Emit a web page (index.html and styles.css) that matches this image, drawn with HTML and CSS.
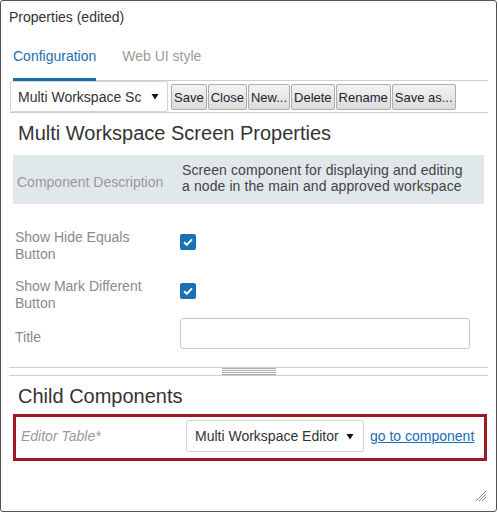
FILE: index.html
```html
<!DOCTYPE html>
<html>
<head>
<meta charset="utf-8">
<title>Properties</title>
<link rel="stylesheet" href="styles.css">
</head>
<body>
<div class="window">
  <div class="title">Properties (edited)</div>
  <div class="tabs">
    <div class="tab active">Configuration</div>
    <div class="tab">Web UI style</div>
  </div>
  <div class="toolbar">
    <div class="select sel-main"><span>Multi Workspace Sc</span><svg class="arrow" width="8" height="7" viewBox="0 0 8 7"><polygon points="0.5,1 7.5,1 4,6.5" fill="#111"/></svg></div>
    <div class="buttons">
      <button class="btn">Save</button>
      <button class="btn">Close</button>
      <button class="btn">New...</button>
      <button class="btn">Delete</button>
      <button class="btn">Rename</button>
      <button class="btn">Save as...</button>
    </div>
  </div>
  <h2 class="heading">Multi Workspace Screen Properties</h2>
  <div class="desc">
    <div class="desc-label">Component Description</div>
    <div class="desc-text">Screen component for displaying and editing a node in the main and approved workspace</div>
  </div>
  <div class="form">
    <div class="row">
      <div class="label">Show Hide Equals Button</div>
      <div class="cb"><svg width="16" height="16" viewBox="0 0 16 16"><rect x="0" y="0" width="16" height="16" rx="2" fill="#1a6fb5"/><path d="M4 8.2 L6.8 10.8 L12 5.4" fill="none" stroke="#fff" stroke-width="2"/></svg></div>
    </div>
    <div class="row row2">
      <div class="label">Show Mark Different Button</div>
      <div class="cb"><svg width="16" height="16" viewBox="0 0 16 16"><rect x="0" y="0" width="16" height="16" rx="2" fill="#1a6fb5"/><path d="M4 8.2 L6.8 10.8 L12 5.4" fill="none" stroke="#fff" stroke-width="2"/></svg></div>
    </div>
    <div class="row row3">
      <div class="label label-title">Title</div>
      <div class="input"></div>
    </div>
  </div>
  <div class="splitter"><div class="grip"></div></div>
  <h2 class="heading child-heading">Child Components</h2>
  <div class="child-box">
    <div class="child-label">Editor Table*</div>
    <div class="select sel-child"><span>Multi Workspace Editor</span><svg class="arrow" width="8" height="7" viewBox="0 0 8 7"><polygon points="0.5,1 7.5,1 4,6.5" fill="#111"/></svg></div>
    <a class="link" href="#">go to component</a>
  </div>
  <div class="resize"><svg width="12" height="12" viewBox="0 0 12 12"><path d="M1 11 L11 1 M4 11 L11 4 M7 11 L11 7" stroke="#8a8a8a" stroke-width="1"/></svg></div>
</div>
</body>
</html>
```

FILE: styles.css
```css
body {
  margin: 0;
  background: #fff;
  font-family: "Liberation Sans", Arial, sans-serif;
}

.window {
  position: relative;
  box-sizing: border-box;
  width: 497px;
  height: 512px;
  border: 1px solid #555;
  border-radius: 3px;
  padding: 0 8px;
}

.title {
  margin-top: 8px;
  font-size: 14px;
  line-height: 16px;
  color: #333;
}

.tabs {
  display: flex;
  gap: 26px;
  margin: 10px 0 0 4px;
  border-bottom: 1px solid #ccc;
}

.tab {
  font-size: 14px;
  line-height: 16px;
  padding: 13px 0 14px;
  color: #9a9a9a;
  border-bottom: 3px solid transparent;
  margin-bottom: -1px;
}

.tab.active {
  color: #1a6fb0;
  border-bottom-color: #1a6fb0;
}

.toolbar {
  display: flex;
  align-items: center;
  margin-left: 1px;
  border-bottom: 1px solid #ccc;
}

.select {
  box-sizing: border-box;
  display: flex;
  align-items: center;
  justify-content: space-between;
  height: 31px;
  border: 1px solid #d4d4d4;
  border-radius: 2px;
  background: #fff;
  font-size: 14px;
  color: #333;
}

.sel-main {
  width: 158px;
  padding: 0 8px 0 7px;
}

.buttons {
  display: flex;
  gap: 1px;
  margin-left: 3px;
  padding-top: 1px;
}

.btn {
  height: 26px;
  padding: 0 2px;
  border: 1px solid #adadad;
  border-radius: 2px;
  background: linear-gradient(#f3f3f3, #dcdcdc);
  font-family: "Liberation Sans", Arial, sans-serif;
  font-size: 13px;
  color: #1e1e30;
}

.heading {
  margin: 8px 0 0 9px;
  font-size: 20px;
  line-height: 24px;
  font-weight: normal;
  color: #333;
}

.desc {
  display: flex;
  margin: 10px 4px 0 4px;
  padding: 7px 0 10px;
  background: #e1e8eb;
}

.desc-label {
  box-sizing: border-box;
  width: 169px;
  padding: 8px 0 0 4px;
  align-self: center;
  font-size: 14px;
  line-height: 16px;
  color: #999;
}

.desc-text {
  width: 283px;
  font-size: 14px;
  line-height: 16px;
  letter-spacing: 0.1px;
  color: #444;
}

.form {
  margin-top: 25px;
}

.row {
  display: flex;
  margin-left: 6px;
}

.row2 {
  margin-top: 15px;
}

.row3 {
  margin-top: 6px;
}

.label {
  width: 150px;
  margin-right: 15px;
  font-size: 14px;
  line-height: 17px;
  color: #8a8a8a;
}

.label-title {
  padding-top: 11px;
}

.cb {
  margin-top: 5px;
  height: 16px;
}

.input {
  box-sizing: border-box;
  width: 290px;
  height: 31px;
  border: 1px solid #c8c8c8;
  border-radius: 3px;
}

.splitter {
  margin-top: 18px;
  height: 7px;
  border-top: 1px solid #ccc;
  border-bottom: 1px solid #ccc;
}

.grip {
  width: 54px;
  height: 7px;
  margin: 0 auto;
  background: repeating-linear-gradient(to bottom, #ababab 0 1px, transparent 1px 2px);
}

.child-heading {
  margin-top: 8px;
}

.child-box {
  display: flex;
  align-items: center;
  margin: 6px 1px 0 4px;
  padding: 3px 0 6px 5px;
  border: 3px solid #9c1a22;
}

.child-label {
  width: 165px;
  font-size: 14px;
  font-style: italic;
  color: #999;
}

.sel-child {
  width: 178px;
  height: 32px;
  padding: 0 9px 0 8px;
}

.link {
  margin-left: 6px;
  font-size: 14px;
  color: #1a6db5;
  text-decoration: underline;
}

.resize {
  position: absolute;
  right: 9px;
  bottom: 9px;
  width: 12px;
  height: 12px;
}

.resize svg {
  display: block;
}
```
